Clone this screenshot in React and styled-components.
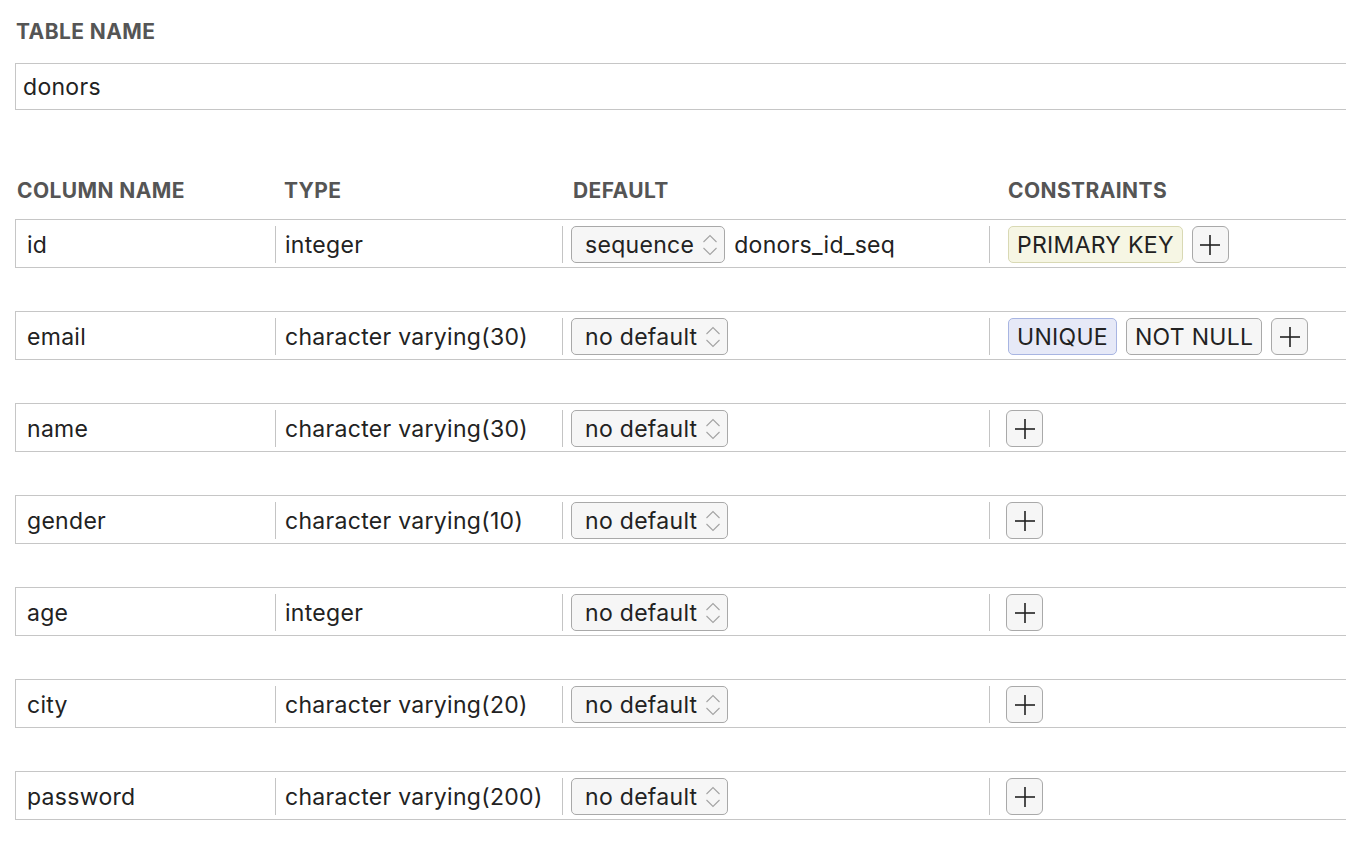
import styled, { createGlobalStyle } from "styled-components";

const GlobalStyle = createGlobalStyle`
  html, body {
    margin: 0;
    padding: 0;
    background: #ffffff;
    overflow: hidden;
  }
  body {
    font-family: Inter, "Open Sans", "Liberation Sans", sans-serif;
    color: #222222;
  }
`;

const columns = [
  { name: "id", type: "integer", def: "sequence", seq: "donors_id_seq", constraints: ["pk"] },
  { name: "email", type: "character varying(30)", def: "no default", constraints: ["unique", "notnull"] },
  { name: "name", type: "character varying(30)", def: "no default", constraints: [] },
  { name: "gender", type: "character varying(10)", def: "no default", constraints: [] },
  { name: "age", type: "integer", def: "no default", constraints: [] },
  { name: "city", type: "character varying(20)", def: "no default", constraints: [] },
  { name: "password", type: "character varying(200)", def: "no default", constraints: [] },
];

const badgeLabels = {
  pk: "PRIMARY KEY",
  unique: "UNIQUE",
  notnull: "NOT NULL",
};

const Page = styled.div`
  width: 1400px;
  padding-left: 15px;
`;

const Label = styled.div`
  font-size: 21px;
  font-weight: 700;
  letter-spacing: 0.4px;
  color: #555555;
  height: 26px;
  line-height: 26px;
  padding-left: ${(p) => p.$indent || 1}px;
`;

const TableLabel = styled(Label)`
  margin-top: 19px;
`;

const NameInput = styled.div`
  margin-top: 18px;
  height: 45px;
  border: 1px solid #c6c6c6;
  display: flex;
  align-items: center;
  padding-left: 7px;
  font-size: 23px;
  letter-spacing: 0.3px;
`;

const Grid = styled.div`
  display: grid;
  grid-template-columns: 259px 287px 427px 1fr;
`;

const HeaderRow = styled(Grid)`
  margin-top: 68px;
  margin-bottom: 15px;
`;

const HeaderCell = styled(Label)`
  padding-left: ${(p) => p.$indent}px;
`;

const Rows = styled.div`
  display: flex;
  flex-direction: column;
  gap: 43px;
`;

const Row = styled(Grid)`
  height: 47px;
  border: 1px solid #c6c6c6;
  border-right: none;
  box-sizing: content-box;
`;

const Cell = styled.div`
  display: flex;
  align-items: center;
  gap: ${(p) => p.$gap || 0}px;
  font-size: 23px;
  letter-spacing: 0.3px;
  padding-left: ${(p) => p.$pad}px;
  border-left: ${(p) => (p.$divider ? "1.5px solid #c4c4c4" : "none")};
  margin: ${(p) => (p.$divider ? "6px 0" : "0")};
`;

const Select = styled.div`
  display: flex;
  align-items: center;
  box-sizing: border-box;
  height: 37px;
  padding: 0 6px 0 13px;
  gap: 8px;
  border: 1px solid #a9a9a9;
  border-radius: 5px;
  background: #f6f6f6;
`;

const Chevrons = styled.svg`
  width: 16px;
  height: 30px;
  display: block;
`;

const Badge = styled.div`
  box-sizing: border-box;
  height: 37px;
  display: flex;
  align-items: center;
  padding: 0 8px;
  border-radius: 5px;
  border: 1px solid
    ${(p) => (p.$kind === "pk" ? "#d9d9b4" : p.$kind === "unique" ? "#a8b5e2" : "#a9a9a9")};
  background: ${(p) =>
    p.$kind === "pk" ? "#f6f6e4" : p.$kind === "unique" ? "#e6e9f7" : "#f6f6f6"};
`;

const PlusButton = styled.div`
  box-sizing: border-box;
  width: 37px;
  height: 37px;
  border: 1px solid #a9a9a9;
  border-radius: 6px;
  background: #f6f6f6;
  display: flex;
  align-items: center;
  justify-content: center;
`;

function StepperIcon() {
  return (
    <Chevrons viewBox="0 0 16 30">
      <polyline points="1.5,12 8,5.5 14.5,12" fill="none" stroke="#a3a3a3" strokeWidth="1.1" />
      <polyline points="1.5,18 8,24.5 14.5,18" fill="none" stroke="#a3a3a3" strokeWidth="1.1" />
    </Chevrons>
  );
}

function PlusIcon() {
  return (
    <svg width="22" height="22" viewBox="0 0 22 22">
      <line x1="11" y1="1" x2="11" y2="21" stroke="#222" strokeWidth="1.6" />
      <line x1="1" y1="11" x2="21" y2="11" stroke="#222" strokeWidth="1.6" />
    </svg>
  );
}

function ColumnRow({ col }) {
  const indent = col.constraints.length ? 18 : 16;
  return (
    <Row>
      <Cell $pad={11}>{col.name}</Cell>
      <Cell $divider $pad={9}>{col.type}</Cell>
      <Cell $divider $pad={8} $gap={9}>
        <Select>
          {col.def}
          <StepperIcon />
        </Select>
        {col.seq && <span>{col.seq}</span>}
      </Cell>
      <Cell $divider $pad={indent} $gap={9}>
        {col.constraints.map((c) => (
          <Badge key={c} $kind={c}>
            {badgeLabels[c]}
          </Badge>
        ))}
        <PlusButton>
          <PlusIcon />
        </PlusButton>
      </Cell>
    </Row>
  );
}

export default function App() {
  return (
    <>
      <GlobalStyle />
      <Page>
        <TableLabel>TABLE NAME</TableLabel>
        <NameInput>donors</NameInput>
        <HeaderRow>
          <HeaderCell $indent={2}>COLUMN NAME</HeaderCell>
          <HeaderCell $indent={10}>TYPE</HeaderCell>
          <HeaderCell $indent={12}>DEFAULT</HeaderCell>
          <HeaderCell $indent={20}>CONSTRAINTS</HeaderCell>
        </HeaderRow>
        <Rows>
          {columns.map((col) => (
            <ColumnRow key={col.name} col={col} />
          ))}
        </Rows>
      </Page>
    </>
  );
}
